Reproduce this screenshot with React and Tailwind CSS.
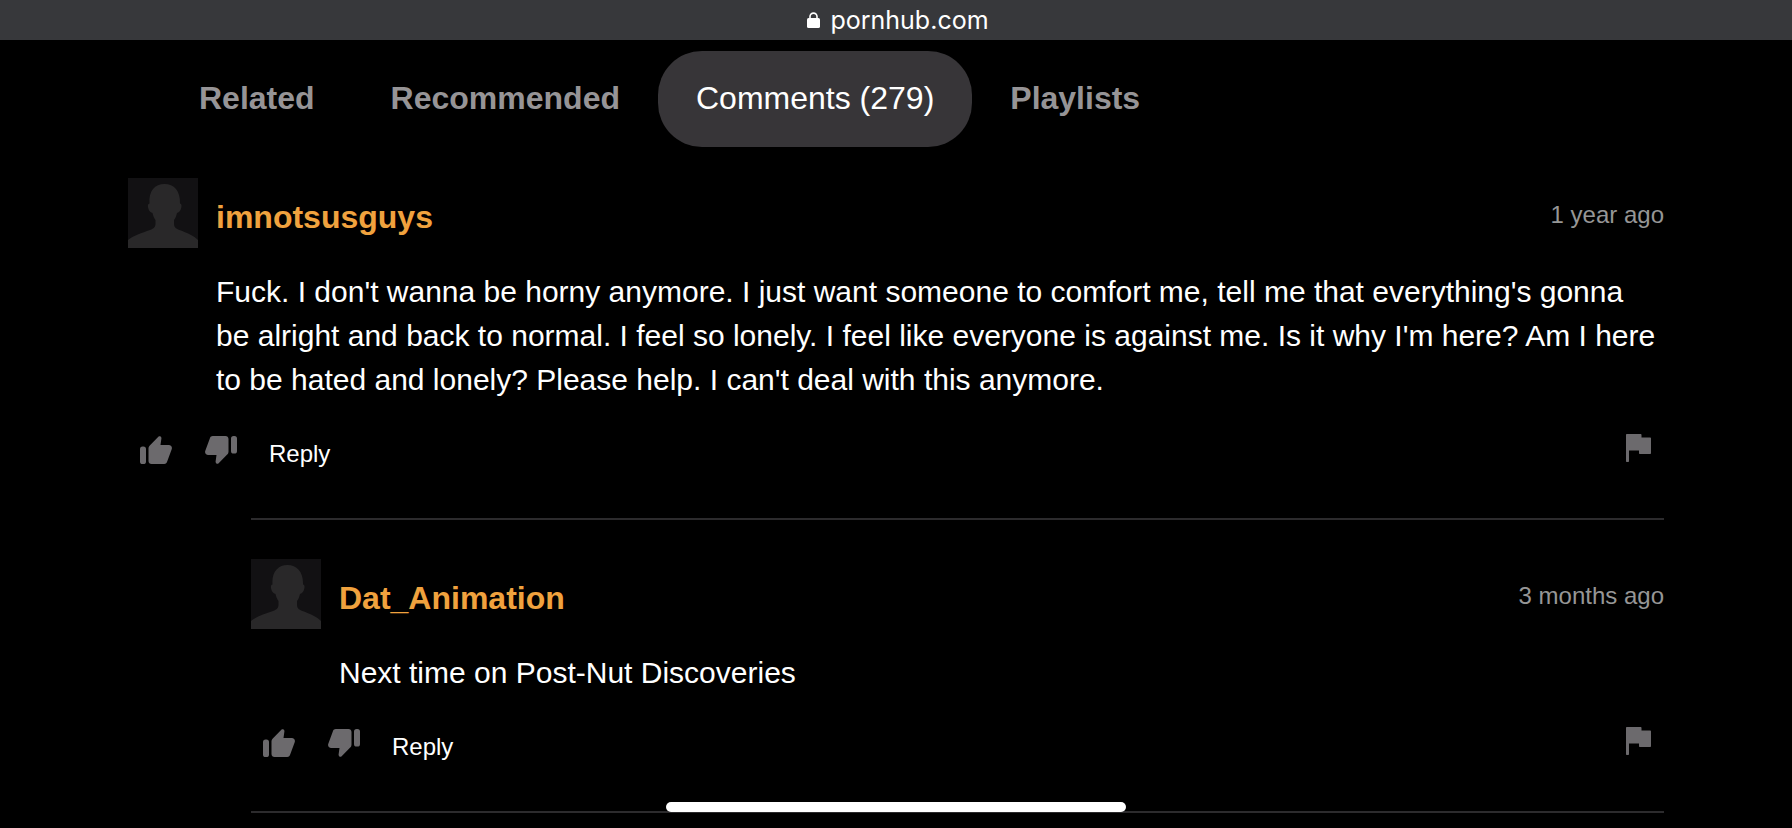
import React, { useState } from "react";

const tabs = ["Related", "Recommended", "Comments (279)", "Playlists"];

const comments = [
  {
    user: "imnotsusguys",
    time: "1 year ago",
    text: "Fuck. I don't wanna be horny anymore. I just want someone to comfort me, tell me that everything's gonna be alright and back to normal. I feel so lonely. I feel like everyone is against me. Is it why I'm here? Am I here to be hated and lonely? Please help. I can't deal with this anymore.",
  },
  {
    user: "Dat_Animation",
    time: "3 months ago",
    text: "Next time on Post-Nut Discoveries",
    isReply: true,
  },
];

function LockIcon() {
  return (
    <svg width="13" height="16" viewBox="0 0 13 16" fill="none" aria-hidden="true">
      <path d="M3 8V4.600a3.500 3.500 0 0 1 7 0V8" stroke="currentColor" strokeWidth="1.6" />
      <rect y="6" width="13" height="10" rx="1.6" fill="currentColor" />
    </svg>
  );
}

function ThumbIcon({ down }) {
  return (
    <svg
      width="32"
      height="28"
      viewBox="0 0 32 28"
      fill="currentColor"
      className={down ? "rotate-180" : ""}
      aria-hidden="true"
    >
      <rect y="10.5" width="6" height="17.5" rx="2.6" />
      <path d="M8.500 12.500c0-1.200.4-2.200 1.300-3.100L18.600.6c.6-.6 1.500-.6 2 0l.4.5c.4.4.5.9.4 1.400L20.500 9h8.300c2.300 0 3.700 2.100 2.900 4.200l-4.700 12.900c-.4 1.200-1.500 1.900-2.700 1.900H11.500c-1.700 0-3-1.300-3-3z" />
    </svg>
  );
}

function FlagIcon() {
  return (
    <svg width="25" height="28" viewBox="0 0 25 28" fill="currentColor" aria-hidden="true">
      <path d="M1 0h13.500c.6 0 1 .4 1 1v2.500H24c.6 0 1 .4 1 1V19c0 .6-.4 1-1 1H14c-.6 0-1-.4-1-1v-2.500H3V27c0 .6-.4 1-1 1H1c-.6 0-1-.4-1-1V1c0-.6.4-1 1-1z" />
    </svg>
  );
}

function Avatar() {
  return (
    <svg width="70" height="70" viewBox="0 0 70 70" className="shrink-0" aria-hidden="true">
      <rect width="70" height="70" fill="#121113" />
      <path
        fill="#292829"
        d="M0 70v-8c5-4.500 14-7 22-10 4-1.500 5.500-3 5.500-6.500V42c-1.500-2-2.500-4.500-3-7-2.500-.5-4-3-4.500-6-.3-2 0-3 1.500-3.500C20.500 13 27 6 36.500 6S52.500 13 52 25.500c1.500.5 1.700 1.500 1.400 3.500-.5 3-2 5.500-4.400 6-.5 2.500-1.500 5-3 7v3.500c0 3.500 1.500 5 5.500 6.500C59 55 66 57.500 70 62v8z"
      />
    </svg>
  );
}

function Comment({ user, time, text, isReply }) {
  return (
    <article className={isReply ? "ml-[123px] pt-[39px]" : "pt-[31px]"}>
      <div className="flex items-center">
        <Avatar />
        <a href="#" className="ml-[18px] pt-2 text-[32px] leading-10 font-bold text-[#f0a23e]">
          {user}
        </a>
        <span className="ml-auto pt-1 text-2xl text-[#969696]">{time}</span>
      </div>
      <p className="mt-[22px] ml-[88px] pr-1 text-3xl leading-11 text-white">{text}</p>
      <div className="mt-[34px] flex h-7 items-center pl-3 text-[#6c6a6d]">
        <button aria-label="Like">
          <ThumbIcon />
        </button>
        <button aria-label="Dislike" className="ml-[33px]">
          <ThumbIcon down />
        </button>
        <button className="ml-8 pt-2 text-2xl text-white">Reply</button>
        <button aria-label="Report" className="mr-[13px] ml-auto pb-1">
          <FlagIcon />
        </button>
      </div>
    </article>
  );
}

export default function App() {
  const [active, setActive] = useState("Comments (279)");

  return (
    <div className="min-h-screen bg-black font-['Liberation_Sans',Arial,sans-serif]">
      <header className="flex h-10 items-center justify-center gap-2.5 bg-[#37383b] pl-1 text-white">
        <LockIcon />
        <span className="font-[Inter,sans-serif] text-[25px] leading-9">pornhub.com</span>
      </header>
      <main className="px-32">
        <nav className="flex px-[33px] pt-[11px]">
          {tabs.map((tab) => (
            <button
              key={tab}
              onClick={() => setActive(tab)}
              className={`h-24 rounded-[44px] px-[38px] pb-0.5 text-[32px] whitespace-nowrap ${
                tab === active ? "bg-[#373538] text-white" : "font-bold text-[#969496]"
              }`}
            >
              {tab}
            </button>
          ))}
        </nav>
        {comments.map((c) => (
          <React.Fragment key={c.user}>
            <Comment {...c} />
            <hr className="mt-[54px] ml-[123px] border-t-2 border-[#2c2b2d]" />
          </React.Fragment>
        ))}
      </main>
      <div className="fixed bottom-4 left-1/2 h-2.5 w-[460px] -translate-x-1/2 rounded-full bg-white" />
    </div>
  );
}
